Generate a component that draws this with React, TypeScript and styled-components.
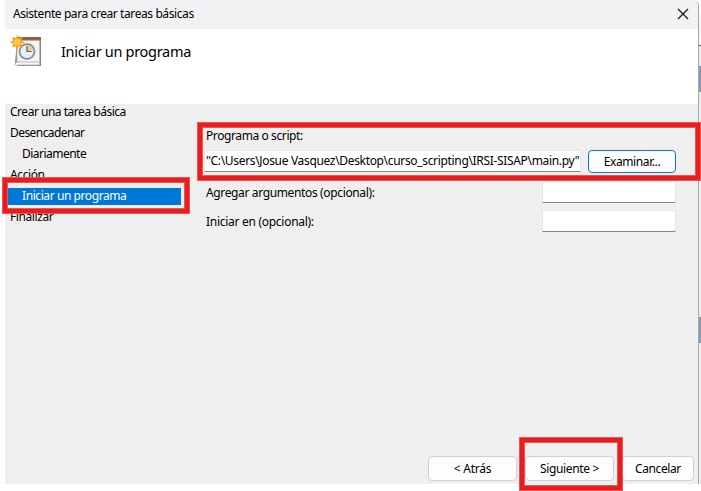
import React from "react";
import styled, { createGlobalStyle } from "styled-components";

const Global = createGlobalStyle`
  * { box-sizing: border-box; }
  body { margin: 0; background: #fff; overflow: hidden; }
`;

const Screen = styled.div`
  position: relative;
  display: flex;
  width: 701px;
  height: 491px;
  padding-left: 5px;
  overflow: hidden;
  background: #fff;
  color: #000;
  font: 12px/16px "Noto Sans", "Open Sans", sans-serif;
`;

const Dialog = styled.main`
  display: flex;
  flex-direction: column;
  width: 694px;
  height: 484px;
  border-right: 1px solid #a9a9a9;
  border-top-right-radius: 6px;
  background: #efefef;
  overflow: hidden;
`;

const Backdrop = styled.div`
  display: grid;
  grid-template-rows: 14px 23px 8px 1px 20px 26px 225px 26px 141px;
  width: 2px;
  height: 484px;
`;

const Strip = styled.div<{ $color: string }>`
  background: ${(p) => p.$color};
`;

const TitleBar = styled.header`
  display: flex;
  align-items: center;
  justify-content: space-between;
  height: 29px;
  padding: 0 9px 2px 8px;
  background: #f1f2f4;
`;

const Label = styled.span<{ $spacing?: number }>`
  white-space: pre;
  letter-spacing: ${(p) => p.$spacing ?? 0}px;
`;

const CloseButton = styled.button`
  display: flex;
  padding: 0;
  border: 0;
  background: none;
`;

const Banner = styled.section`
  display: flex;
  gap: 17px;
  height: 75px;
  padding: 5px 0 0 4px;
  background: #fff;
`;

const Heading = styled.h1<{ $spacing: number }>`
  margin: 7px 0 0;
  font-size: 14.5px;
  line-height: 20px;
  font-weight: 400;
  letter-spacing: ${(p) => p.$spacing}px;
`;

const Body = styled.section`
  display: flex;
  height: 346px;
`;

const Steps = styled.nav`
  display: flex;
  flex-direction: column;
  gap: 4px;
  width: 176px;
  padding: 0 0 0 2px;
`;

const Step = styled.div<{ $nested?: boolean; $active?: boolean }>`
  height: 17px;
  padding-left: ${(p) => (p.$nested ? 15 : 3)}px;
  line-height: 16px;
  background: ${(p) => (p.$active ? "#0078d7" : "transparent")};
  color: ${(p) => (p.$active ? "#fff" : "#000")};
`;

const Form = styled.form`
  display: flex;
  flex-direction: column;
  width: 490px;
  margin-left: 23px;
  padding-top: 24px;
`;

const FieldTitle = styled.div`
  height: 22px;
  padding-left: 2px;
`;

const Row = styled.div<{ $gap?: number }>`
  display: flex;
  justify-content: space-between;
  width: 472px;
  padding-left: ${(p) => (p.$gap ? 2 : 0)}px;
  margin-top: ${(p) => p.$gap ?? 0}px;
`;

const Input = styled.div<{ $width: number }>`
  display: flex;
  align-items: center;
  width: ${(p) => p.$width}px;
  height: 22px;
  padding: 0 0 1px 1px;
  border: 1px solid #e6e6e6;
  border-bottom-color: #868686;
  border-radius: 1px;
  background: #fff;
`;

const RowLabel = styled.div`
  padding-top: 4px;
`;

const Button = styled.button<{ $width: number; $height: number; $focus?: boolean }>`
  width: ${(p) => p.$width}px;
  height: ${(p) => p.$height}px;
  padding: 0;
  border: 1px solid ${(p) => (p.$focus ? "#0078d4" : "#d0d0d0")};
  border-radius: 4px;
  background: #fdfdfd;
  color: #000;
  font: inherit;
  text-align: center;
`;

const Footer = styled.footer`
  display: flex;
  justify-content: flex-end;
  gap: 8px;
  padding: 6px 4px 0 0;
`;

const Marker = styled.div<{ $x: number; $y: number; $w: number; $h: number }>`
  position: absolute;
  left: ${(p) => p.$x}px;
  top: ${(p) => p.$y}px;
  width: ${(p) => p.$w}px;
  height: ${(p) => p.$h}px;
  border: 1px solid #ec5657;
  box-shadow: inset 0 0 0 4px #e91c1e, inset 0 0 0 5px #ec5657;
  pointer-events: none;
`;

const TaskIcon = () => (
  <svg width="35" height="35" viewBox="0 0 35 35">
    <path d="M8 6h24v26H9l-3-3z" fill="#858585" />
    <path d="M8 5h22.500v23H8z" fill="#f6f5f3" stroke="#bbb" strokeWidth=".7" />
    <path d="M7.500 28h23v3H5.500z" fill="#f4f4f2" stroke="#b5b5b5" strokeWidth=".7" />
    <path d="M8 3h24v3.500H8z" fill="#96604c" />
    <circle cx="18" cy="17.500" r="8.500" fill="#a9a9a9" />
    <circle cx="18" cy="17.500" r="7.200" fill="#e7eef5" stroke="#7d8790" strokeWidth="1.200" />
    <path d="M18 17.500v-6a6 6 0 0 1 6 6z" fill="#f4cd83" />
    <path d="M18 12v5.500h4.500" fill="none" stroke="#53616e" strokeWidth="1.200" />
    <path d="m8.500.8 1.200 3.500 4-1.500-1.500 3.900 3.500 1.500-3.500 1.600 1.500 4-4-1.600-1.500 3.500-1.500-3.500-3.700 1.400 1.400-3.900L.8 8.200l3.600-1.600L3 2.900l3.900 1.400z" fill="#f5a01d" />
    <circle cx="8.300" cy="8.200" r="3.500" fill="#ffc64b" />
  </svg>
);

const steps = [
  { text: "Crear una tarea básica", spacing: -0.48 },
  { text: "Desencadenar", spacing: -0.56 },
  { text: "Diariamente", spacing: -0.52 },
  { text: "Acción", spacing: -0.4 },
  { text: "Iniciar un programa", spacing: -0.42, active: true },
  { text: "Finalizar", spacing: -0.4 },
].map((s) => ({ ...s, nested: s.text === "Diariamente" || !!s.active }));

const backdrop = ["#fff", "#f4f4f4", "#f8f8f8", "#555", "#eee", "#8799b2", "#ededed", "#8799b2", "#ededed"];

export default function App() {
  return (
    <Screen>
      <Global />
      <Dialog>
        <TitleBar>
          <Label $spacing={-0.41}>Asistente para crear tareas básicas</Label>
          <CloseButton aria-label="Cerrar">
            <svg width="12" height="12" viewBox="0 0 12 12">
              <path d="m1 1 10 10M11 1 1 11" stroke="#151515" strokeWidth="1.2" />
            </svg>
          </CloseButton>
        </TitleBar>
        <Banner>
          <TaskIcon />
          <Heading $spacing={-0.3}>Iniciar un programa</Heading>
        </Banner>
        <Body>
          <Steps>
            {steps.map((s) => (
              <Step key={s.text} $nested={s.nested} $active={s.active}>
                <Label $spacing={s.spacing}>{s.text}</Label>
              </Step>
            ))}
          </Steps>
          <Form>
            <FieldTitle><Label $spacing={-0.4}>Programa o script:</Label></FieldTitle>
            <Row>
              <Input $width={377}>
                <Label $spacing={-0.33}>{'"C:\\Users\\Josue Vasquez\\Desktop\\curso_scripting\\IRSI-SISAP\\main.py"'}</Label>
              </Input>
              <Button type="button" $width={88} $height={23} $focus><Label $spacing={-0.4}>Examinar...</Label></Button>
            </Row>
            <Row $gap={8}>
              <RowLabel><Label $spacing={-0.36}>Agregar argumentos (opcional):</Label></RowLabel>
              <Input $width={134} />
            </Row>
            <Row $gap={7}>
              <RowLabel><Label $spacing={-0.28}>Iniciar en (opcional):</Label></RowLabel>
              <Input $width={134} />
            </Row>
          </Form>
        </Body>
        <Footer>
          <Button $width={89} $height={25}><Label $spacing={-0.25}>{"< Atrás"}</Label></Button>
          <Button $width={89} $height={25}><Label $spacing={-0.35}>{"Siguiente >"}</Label></Button>
          <Button $width={72} $height={25}><Label $spacing={-0.4}>Cancelar</Label></Button>
        </Footer>
      </Dialog>
      <Backdrop>
        {backdrop.map((c, i) => <Strip key={i} $color={c} />)}
      </Backdrop>
      <Marker $x={2} $y={177} $w={188} $h={37} />
      <Marker $x={197} $y={122} $w={504} $h={59} />
      <Marker $x={519} $y={437} $w={104} $h={54} />
    </Screen>
  );
}
